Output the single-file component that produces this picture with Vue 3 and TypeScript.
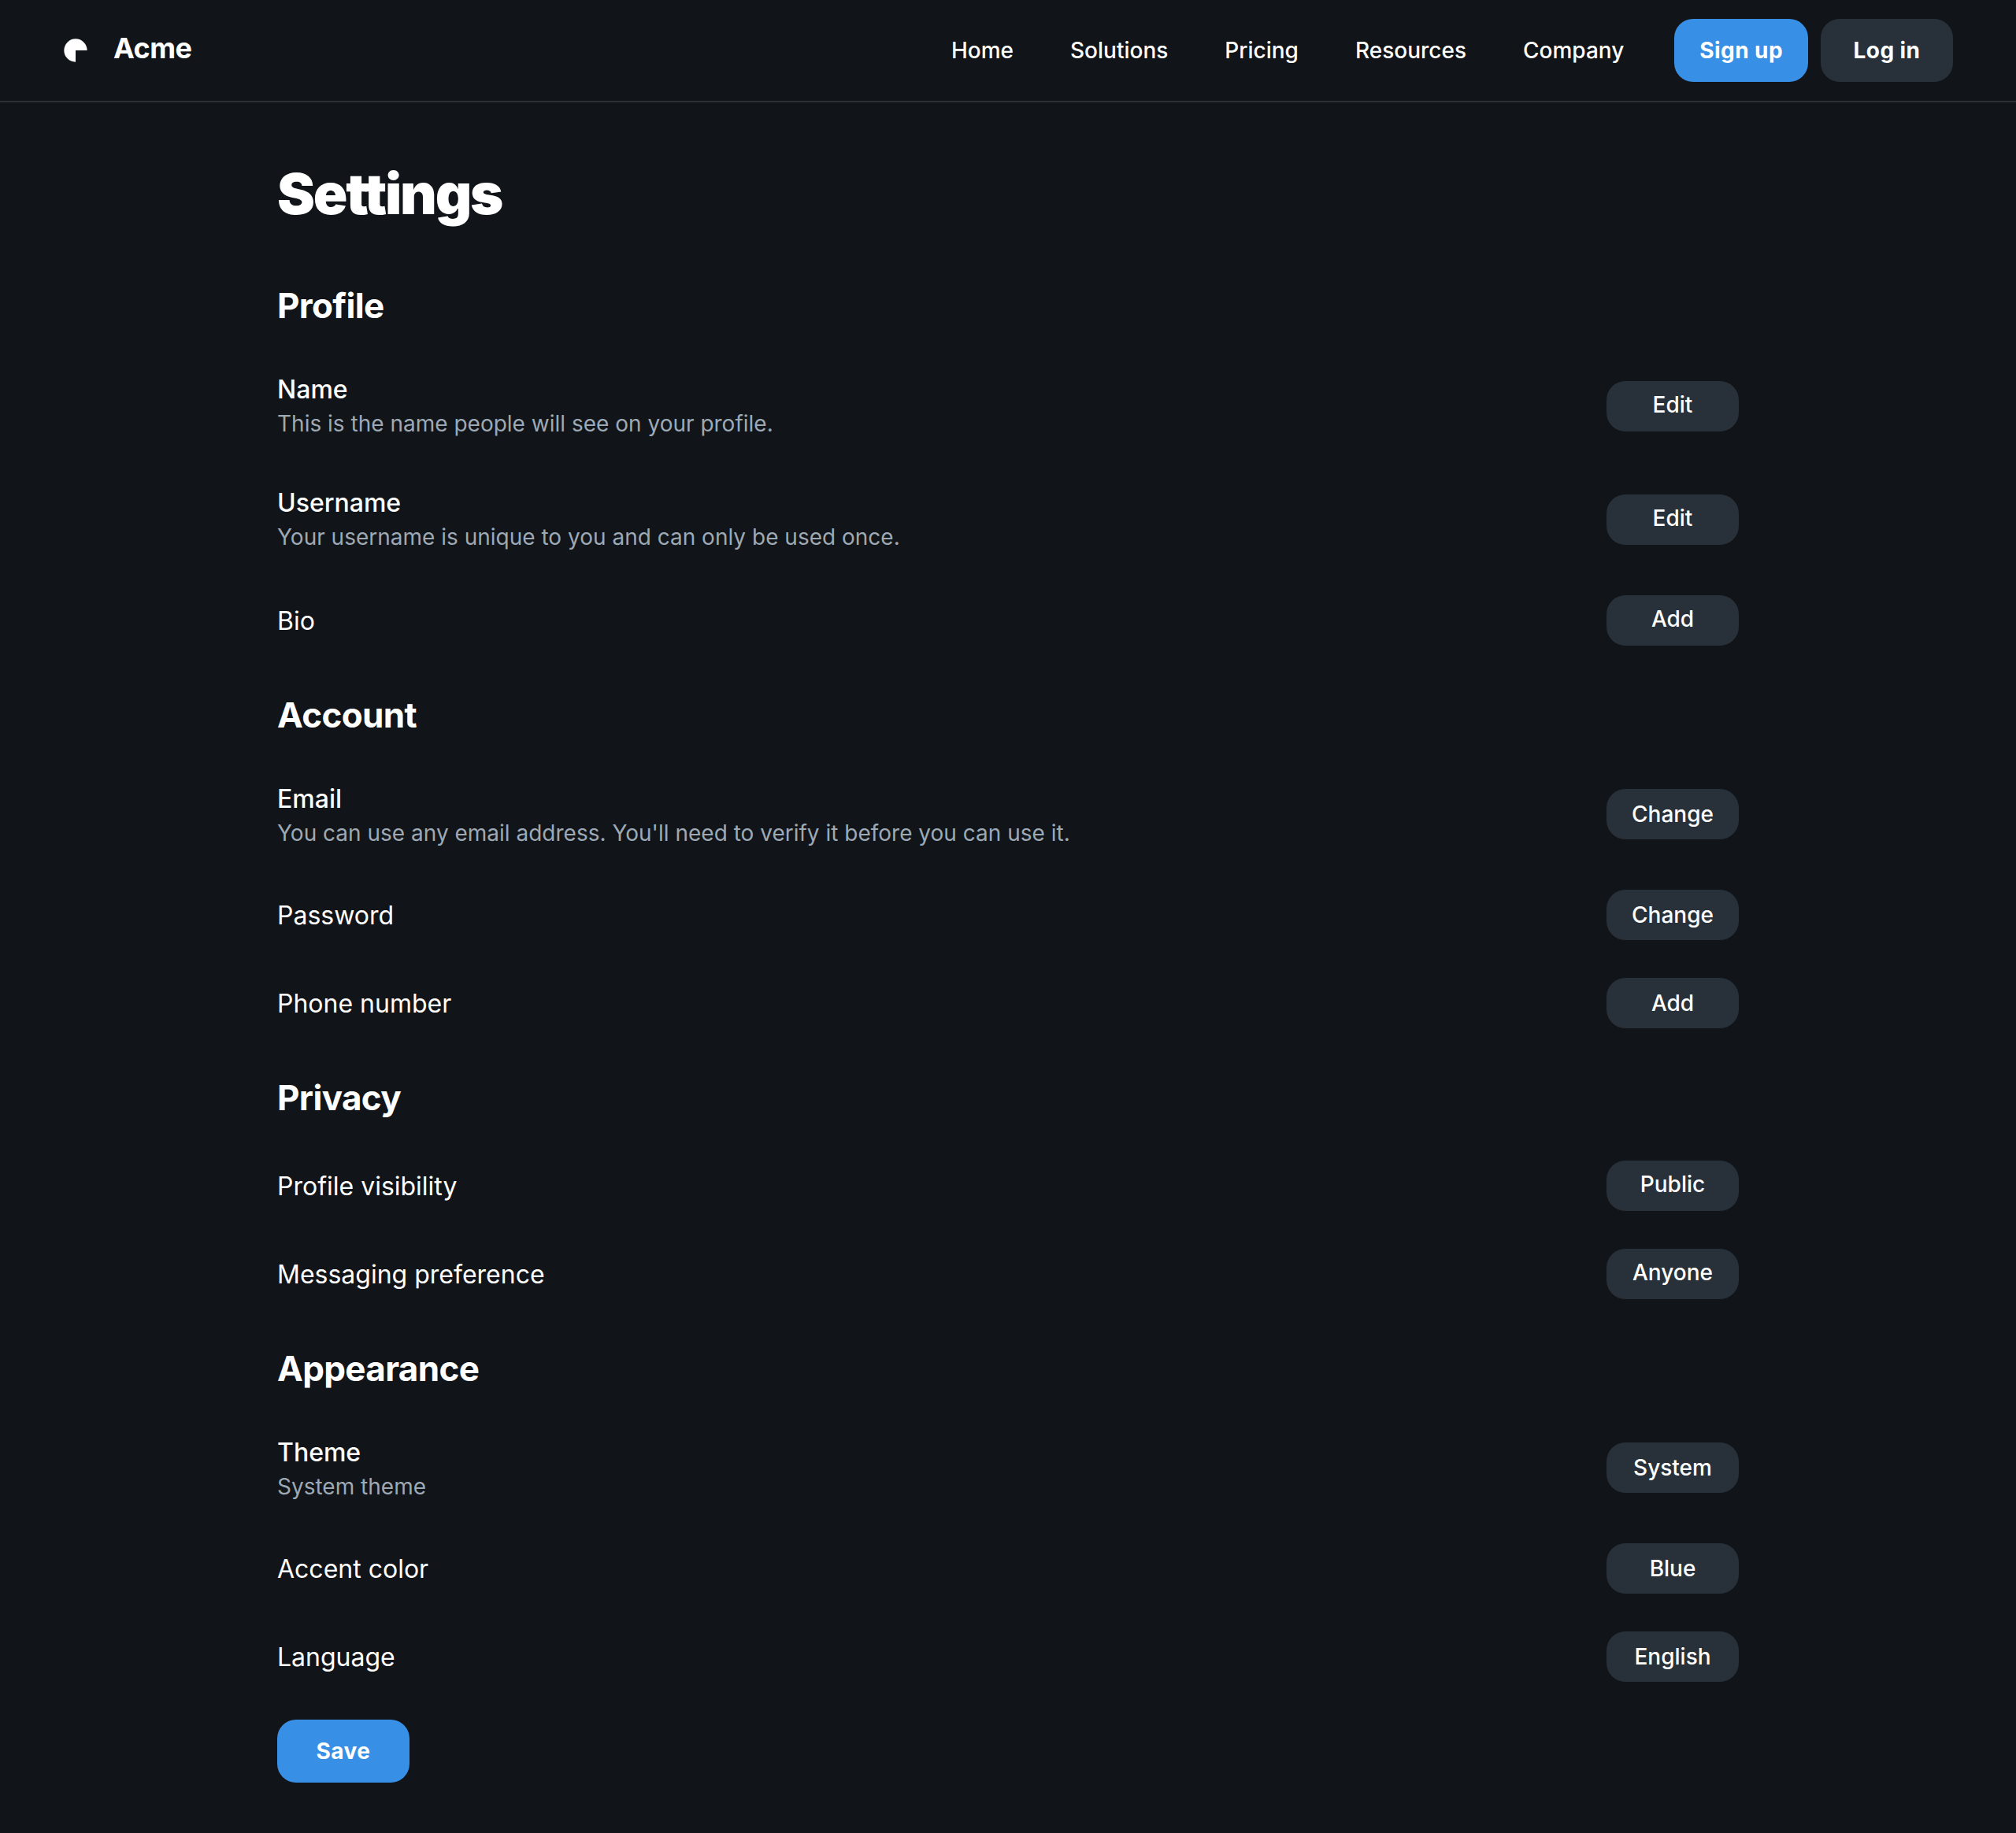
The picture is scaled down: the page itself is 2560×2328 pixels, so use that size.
<script setup lang="ts">
interface Setting {
  label: string
  action: string
  hint?: string
}

interface Section {
  title: string
  raised: boolean
  settings: Setting[]
}

const links: string[] = ['Home', 'Solutions', 'Pricing', 'Resources', 'Company']

const sections: Section[] = [
  {
    title: 'Profile',
    raised: true,
    settings: [
      { label: 'Name', hint: 'This is the name people will see on your profile.', action: 'Edit' },
      { label: 'Username', hint: 'Your username is unique to you and can only be used once.', action: 'Edit' },
      { label: 'Bio', action: 'Add' },
    ],
  },
  {
    title: 'Account',
    raised: false,
    settings: [
      {
        label: 'Email',
        hint: "You can use any email address. You'll need to verify it before you can use it.",
        action: 'Change',
      },
      { label: 'Password', action: 'Change' },
      { label: 'Phone number', action: 'Add' },
    ],
  },
  {
    title: 'Privacy',
    raised: true,
    settings: [
      { label: 'Profile visibility', action: 'Public' },
      { label: 'Messaging preference', action: 'Anyone' },
    ],
  },
  {
    title: 'Appearance',
    raised: false,
    settings: [
      { label: 'Theme', hint: 'System theme', action: 'System' },
      { label: 'Accent color', action: 'Blue' },
      { label: 'Language', action: 'English' },
    ],
  },
]
</script>

<template>
  <div class="page">
    <header class="topbar">
      <div class="brand">
        <svg class="logo" viewBox="0 0 48 48" aria-hidden="true">
          <path d="M24 46A22 22 0 1 1 46 24H24Z" fill="currentColor" />
        </svg>
        <span class="brand-name">Acme</span>
      </div>
      <div class="topbar-end">
        <nav class="links">
          <a v-for="link in links" :key="link" class="link">{{ link }}</a>
        </nav>
        <div class="auth">
          <button class="btn btn-large btn-primary">Sign up</button>
          <button class="btn btn-large">Log in</button>
        </div>
      </div>
    </header>

    <main class="content">
      <h1 class="title">Settings</h1>

      <section v-for="section in sections" :key="section.title" :class="{ raised: section.raised }">
        <h2 class="section-title">{{ section.title }}</h2>
        <div
          v-for="setting in section.settings"
          :key="setting.label"
          class="row"
          :class="{ 'row-tall': setting.hint }"
        >
          <div class="row-text">
            <p class="label">{{ setting.label }}</p>
            <p v-if="setting.hint" class="hint">{{ setting.hint }}</p>
          </div>
          <button class="btn btn-small">{{ setting.action }}</button>
        </div>
      </section>

      <div class="footer">
        <button class="btn btn-large btn-primary">Save</button>
      </div>
    </main>
  </div>
</template>

<style>
body {
  margin: 0;
  background: #111418;
}
</style>

<style scoped>
.page {
  box-sizing: border-box;
  min-height: 2328px;
  background: #111418;
  color: #fff;
  font-family: Inter, 'Noto Sans', sans-serif;
  font-optical-sizing: none;
  -webkit-font-smoothing: antialiased;
}

.topbar {
  display: flex;
  align-items: center;
  justify-content: space-between;
  padding: 24px 80px;
  border-bottom: 2px solid #2c3135;
}

.brand {
  display: flex;
  align-items: center;
  gap: 32px;
}

.logo {
  width: 32px;
  height: 32px;
}

.brand-name {
  padding-bottom: 6px;
  font-size: 36px;
  font-weight: 700;
  line-height: 45px;
  letter-spacing: -0.015em;
}

.topbar-end {
  display: flex;
  align-items: center;
  gap: 64px;
}

.links {
  display: flex;
  gap: 72px;
}

.link {
  font-size: 28px;
  font-weight: 500;
  line-height: 42px;
}

.auth {
  display: flex;
  gap: 16px;
}

.btn {
  box-sizing: border-box;
  display: flex;
  align-items: center;
  justify-content: center;
  min-width: 168px;
  margin: 0;
  padding: 0 32px;
  border: 0;
  border-radius: 24px;
  background: #283039;
  color: #fff;
  font-family: inherit;
  font-size: 28px;
  line-height: 42px;
  white-space: nowrap;
}

.btn-large {
  height: 80px;
  font-weight: 700;
  letter-spacing: 0.015em;
}

.btn-primary {
  background: #388fe6;
}

.btn-small {
  height: 64px;
  font-weight: 500;
}

.content {
  width: 1920px;
  margin: 0 auto;
  padding: 40px 0;
}

.title {
  margin: 0;
  padding: 31px 32px 33px;
  font-size: 72px;
  font-weight: 900;
  line-height: 90px;
  letter-spacing: -0.031em;
}

.section-title {
  box-sizing: border-box;
  height: 118px;
  margin: 0;
  padding: 37px 32px 0;
  font-size: 44px;
  font-weight: 700;
  line-height: 55px;
  letter-spacing: -0.015em;
}

.raised .section-title {
  height: 120px;
}

.row {
  box-sizing: border-box;
  display: flex;
  align-items: center;
  justify-content: space-between;
  height: 112px;
  padding: 0 32px;
}

.row-tall {
  height: 144px;
}

.row-text {
  padding-bottom: 2px;
}

.row-tall .row-text {
  padding-bottom: 0;
}

.label,
.hint {
  margin: 0;
}

.label {
  padding-top: 4px;
  font-size: 32px;
  font-weight: 400;
  line-height: 44px;
}

.row-tall .label {
  font-weight: 500;
}

.hint {
  color: #9da9b4;
  font-size: 28px;
  line-height: 42px;
}

.raised .row-tall .row-text {
  padding-bottom: 4px;
}

.raised .btn-small {
  padding-bottom: 4px;
}

.footer {
  display: flex;
  padding: 24px 32px;
}
</style>
